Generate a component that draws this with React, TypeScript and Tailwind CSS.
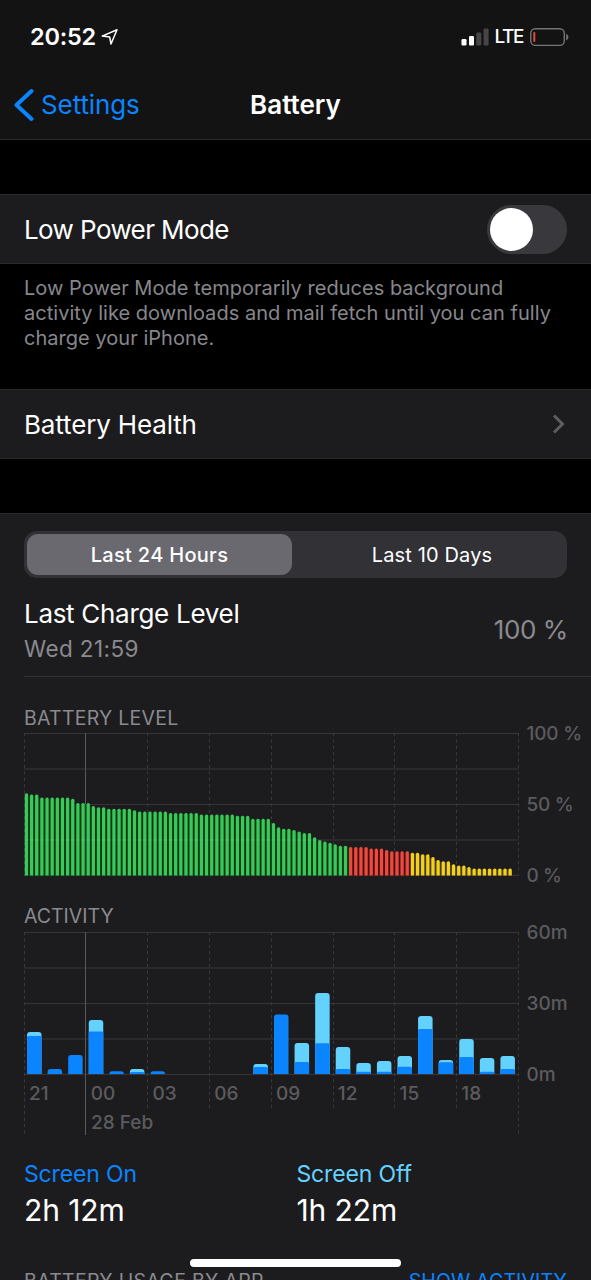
const CHART_X = 24.5;
const CHART_W = 494;
const CHART_H = 142;
const HOUR_LABELS = ["21", "00", "03", "06", "09", "12", "15", "18"];

// [percent, number of consecutive samples]
const greenRuns = [
  [58, 1], [57, 2], [55, 6], [54, 1], [51, 3], [49, 1], [48, 2], [47, 5], [46, 1], [45, 6],
  [44, 6], [43, 7], [42, 3], [40, 4], [37, 1], [34, 1], [33, 2], [32, 1], [31, 1], [30, 2],
  [27, 1], [25, 1], [24, 1], [23, 1], [22, 1], [21, 2],
];
const redRuns = [[20, 4], [19, 3], [18, 1], [17, 4]];
const yellowRuns = [[16, 2], [15, 2], [13, 1], [11, 1], [10, 2], [8, 1], [7, 2], [6, 1], [5, 8]];

const expand = (runs: number[][], color: string, gap: string) =>
  runs.flatMap(([level, count]) => Array.from({ length: count }, () => ({ level, color, gap })));

const levels = [
  ...expand(greenRuns, "#3cc75c", "#07350f"),
  ...expand(redRuns, "#e94b42", "#450d0a"),
  ...expand(yellowRuns, "#f2d022", "#43390a"),
];

// [total height, screen on height] for each hour
const activity = [
  [42, 38], [5, 5], [19, 19], [54, 42.5], [2.7, 2.7], [5, 2], [2.7, 2.7], [0, 0],
  [0, 0], [0, 0], [0, 0], [10, 7], [59.5, 59.5], [31, 12], [81, 30.7], [27, 5],
  [11, 2.3], [13, 2.3], [18, 7.3], [58, 45], [14, 11.7], [35, 17], [16, 2.3], [18, 5],
];

function topRounded(x: number, y: number, w: number, h: number, radius: number) {
  const r = Math.min(radius, h);
  return `M${x} ${y + h}V${y + r}Q${x} ${y} ${x + r} ${y}H${x + w - r}Q${x + w} ${y} ${x + w} ${y + r}V${y + h}Z`;
}

function Grid({ tail, edgeTail }: { tail: number; edgeTail: number }) {
  return (
    <g fill="none">
      {[0, 1, 2, 3, 4].map((i) => (
        <path key={i} d={`M${CHART_X - 0.5} ${0.5 + (i * CHART_H) / 4}h${CHART_W + 0.5}`} stroke="#363639" />
      ))}
      {Array.from({ length: 9 }, (_, i) => {
        const x = Math.floor(24 + i * 61.8) + 0.5;
        const end = CHART_H + (i === 0 || i === 1 || i === 8 ? edgeTail : tail);
        return i === 1 ? (
          <path key={i} d={`M${x} 0V${end}`} stroke="#59595b" />
        ) : (
          <path key={i} d={`M${x} 0V${end}`} stroke="#39393c" strokeDasharray="3.2 3.2" />
        );
      })}
    </g>
  );
}

function LevelChart() {
  const pitch = CHART_W / 96;
  return (
    <svg width="591" height="170" className="-mt-4 block" viewBox="0 -16 591 170">
      <Grid tail={0} edgeTail={0} />
      {levels.map(({ level, color, gap }, i) => {
        const x = CHART_X + 0.3 + i * pitch;
        const h = (level * CHART_H) / 100;
        const next = levels[i + 1];
        return (
          <g key={i}>
            {next && (
              <rect x={x + 1} y={CHART_H + 1.5 - (next.level * CHART_H) / 100} width={pitch} height={(next.level * CHART_H) / 100 - 1} fill={gap} />
            )}
            <path d={topRounded(x, CHART_H + 0.5 - h, 3.3, h, 1.5)} fill={color} />
          </g>
        );
      })}
      <path d="M85.5 70V142M24 107H316" stroke="#ffffff" strokeOpacity="0.1" />
      <g fill="#5b5b5f" fontSize="19" fontWeight="500">
        <text x="526.5" y="7" letterSpacing="-0.2">100 %</text>
        <text x="526.5" y="78" letterSpacing="-0.3">50 %</text>
        <text x="526.5" y="149" letterSpacing="-0.4">0 %</text>
      </g>
    </svg>
  );
}

function ActivityChart() {
  const pitch = CHART_W / 24;
  return (
    <svg width="591" height="220" className="-mt-4 block" viewBox="0 -16 591 220">
      <Grid tail={37} edgeTail={61} />
      {activity.map(([total, on], i) => {
        const x = CHART_X + 2.5 + i * pitch;
        if (!total) return null;
        return (
          <g key={i}>
            {total > on && <path d={topRounded(x, CHART_H - total, 14.5, total, 3)} fill="#64d2ff" />}
            <path d={topRounded(x, CHART_H - on, 14.5, on, total > on ? 1.5 : 3)} fill="#0a84ff" />
          </g>
        );
      })}
      <g fill="#5b5b5f" fontSize="19" fontWeight="500">
        <text x="526.5" y="7">60m</text>
        <text x="526.5" y="78">30m</text>
        <text x="526.5" y="149">0m</text>
        {HOUR_LABELS.map((label, i) => (
          <text key={label} x={29 + (i * CHART_W) / 8} y="168">{label}</text>
        ))}
        <text x="91" y="197">28 Feb</text>
      </g>
    </svg>
  );
}

function StatusBar() {
  return (
    <div className="flex h-[72px] items-center justify-between pt-0.5 pr-[21px] pl-[30px] text-white">
      <div className="flex items-center gap-[5px]">
        <span className="text-[23.5px] font-semibold tracking-[-0.2px]">20:52</span>
        <svg width="18" height="18" viewBox="0 0 18 18" fill="none" stroke="white" strokeWidth="1.5" strokeLinejoin="round">
          <path d="M1.2 8.1L16 1.7L10 16L8.7 9.1Z" />
        </svg>
      </div>
      <div className="flex items-center">
        <svg width="28" height="18" viewBox="0 0 28 18" fill="white">
          <rect x="0.5" y="11" width="5" height="6.5" rx="1.3" />
          <rect x="8" y="8" width="5" height="9.5" rx="1.3" />
          <rect x="15.3" y="4.5" width="5" height="13" rx="1.3" fill="#464646" />
          <rect x="22.6" y="0.5" width="5" height="17" rx="1.3" fill="#464646" />
        </svg>
        <span className="ml-[5px] text-[19px] font-medium tracking-[-1.4px]">LTE</span>
        <svg width="40" height="20" viewBox="0 0 40 20" className="ml-[7px]">
          <rect x="0.8" y="1.8" width="33.5" height="16.6" rx="4.5" fill="none" stroke="#747474" strokeWidth="1.4" />
          <rect x="3.3" y="5" width="2" height="10" rx="0.8" fill="#e04b3b" />
          <path d="M36.2 6.8Q38.5 8 38.5 10.1Q38.5 12.3 36.2 13.4Z" fill="#747474" />
        </svg>
      </div>
    </div>
  );
}

export default function App() {
  return (
    <div className="relative flex h-[1280px] w-[591px] flex-col overflow-hidden bg-black font-['Inter',sans-serif] whitespace-nowrap text-white">
      <header className="h-[140px] shrink-0 border-b border-[#29292b] bg-[#131313]">
        <StatusBar />
        <div className="grid h-[65px] grid-cols-3 items-center">
          <div className="flex items-center gap-[7px] pl-[14px] text-[#0a84ff]">
            <svg width="20" height="34" viewBox="0 0 20 34" fill="none" stroke="currentColor" strokeWidth="4" strokeLinecap="round" strokeLinejoin="round">
              <path d="M17.5 3L2.5 17L17.5 31" />
            </svg>
            <span className="text-[26px] tracking-[-0.1px]">Settings</span>
          </div>
          <h1 className="text-center text-[26px] font-semibold">Battery</h1>
        </div>
      </header>

      <div className="mt-[54px] flex h-[70px] shrink-0 items-center justify-between border-y border-[#29292b] bg-[#1c1c1e] px-6">
        <span className="pt-px text-[26px] tracking-[-0.6px]">Low Power Mode</span>
        <div className="h-[49px] w-20 rounded-full bg-[#39393d] p-[3px]">
          <div className="size-[43px] rounded-full bg-white" />
        </div>
      </div>
      <p className="mt-[12px] px-6 text-[20px] leading-[25.2px] tracking-[0.03px] text-[#87878c]">
        Low Power Mode temporarily reduces background
        <br />
        activity like downloads and mail fetch until you can fully
        <br />
        charge your iPhone.
      </p>

      <div className="mt-[37px] flex h-[70px] shrink-0 items-center justify-between border-y border-[#29292b] bg-[#1c1c1e] px-6">
        <span className="pt-0.5 text-[26px] tracking-[-0.15px]">Battery Health</span>
        <svg width="17" height="20" viewBox="0 0 17 20" fill="none" stroke="#5d5d61" strokeWidth="3">
          <path d="M4 1.5L12.5 10L4 18.5" />
        </svg>
      </div>

      <section className="mt-[54px] h-[767px] shrink-0 border-t border-[#29292b] bg-[#1c1c1e]">
        <div className="mx-6 mt-[17px] flex h-[47px] rounded-[13px] bg-[#313136] p-[3px] text-[20px]">
          <div className="flex w-[265px] items-center justify-center rounded-[11px] bg-[#69696f] pt-px font-medium tracking-[0.3px]">Last 24 Hours</div>
          <div className="flex flex-1 items-center justify-center pt-px pl-2 tracking-[0.15px]">Last 10 Days</div>
        </div>

        <div className="ml-6 flex h-[99px] items-center justify-between border-b border-[#323235] pr-[23px]">
          <div className="pt-[7px]">
            <div className="text-[26px] leading-[36px] tracking-[-0.3px]">Last Charge Level</div>
            <div className="text-[22.5px] leading-[33px] tracking-[0.4px] text-[#8a8a8f]">Wed 21:59</div>
          </div>
          <span className="pt-1.5 text-[26px] tracking-[-0.4px] text-[#8a8a8f]">100 %</span>
        </div>

        <h2 className="mt-[27px] ml-6 text-[19.5px] leading-7 tracking-[0.25px] text-[#8a8a8f]">BATTERY LEVEL</h2>
        <div className="pt-px">
          <LevelChart />
        </div>
        <h2 className="mt-[15px] ml-6 text-[19.5px] leading-7 text-[#8a8a8f]">ACTIVITY</h2>
        <div className="pt-0.5">
          <ActivityChart />
        </div>

        <div className="mt-[24px] ml-6 grid grid-cols-2">
          <div>
            <div className="text-[23px] leading-7 tracking-[-0.15px] text-[#0a84ff]">Screen On</div>
            <div className="mt-[2px] text-[30px] leading-10 tracking-[-0.1px]">2h 12m</div>
          </div>
          <div className="-ml-[11px]">
            <div className="text-[23px] leading-7 tracking-[-0.15px] text-[#64d2ff]">Screen Off</div>
            <div className="mt-[2px] text-[30px] leading-10 tracking-[-0.1px]">1h 22m</div>
          </div>
        </div>

        <div className="mt-[37px] flex justify-between px-6 text-[19.5px] leading-7">
          <span className="tracking-[0.3px] text-[#8a8a8f]">BATTERY USAGE BY APP</span>
          <span className="tracking-[0.15px] text-[#0a84ff]">SHOW ACTIVITY</span>
        </div>
      </section>

      <div className="absolute top-[1259px] left-[190px] h-2 w-[211px] rounded-full bg-white" />
    </div>
  );
}
